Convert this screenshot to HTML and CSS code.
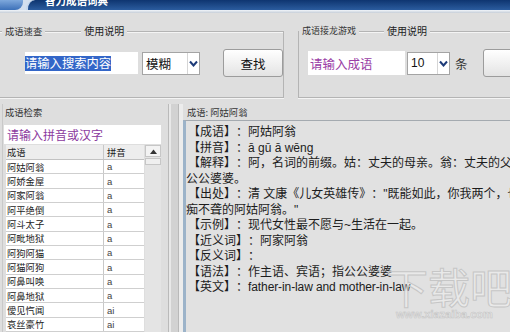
FILE: index.html
```html
<!DOCTYPE html>
<html lang="zh-CN">
<head>
<meta charset="utf-8">
<title>智力成语词典</title>
<link rel="stylesheet" href="styles.css">
</head>
<body>
<div class="titlebar">
  <div class="tb-left"></div>
  <div class="tb-main"><span class="tb-title">智力成语词典</span></div>
</div>
<div class="strip"></div>

<div class="top">
  <div class="group g1">
    <div class="gh"><span class="gl gl1">成语速查</span><span class="gl gl2">使用说明</span></div>
    <div class="grow">
      <div class="inp inp1"><span class="sel">请输入搜索内容</span></div>
      <div class="combo cb1"><span class="cv">模糊</span><span class="arr"><svg width="9" height="7" viewBox="0 0 9 7"><path d="M1 1.5 L4.5 5.5 L8 1.5" fill="none" stroke="#1d3a78" stroke-width="2"/></svg></span></div>
      <div class="btn">查找</div>
    </div>
  </div>
  <div class="group g2">
    <div class="gh"><span class="gl gl1">成语接龙游戏</span><span class="gl gl2">使用说明</span></div>
    <div class="grow">
      <div class="inp inp2">请输入成语</div>
      <div class="combo cb2"><span class="cv">10</span><span class="arr"><svg width="9" height="7" viewBox="0 0 9 7"><path d="M1 1.5 L4.5 5.5 L8 1.5" fill="none" stroke="#1d3a78" stroke-width="2"/></svg></span></div>
      <span class="tiao">条</span>
      <div class="btn btn2"></div>
    </div>
  </div>
</div>

<div class="lower">
  <div class="lp">
    <div class="plabel">成语检索</div>
    <div class="pinp">请输入拼音或汉字</div>
    <div class="tablewrap">
      <div class="tbl">
        <div class="thead"><span class="c1">成语</span><span class="c2">拼音</span></div>
        <div class="tr"><span class="c1">阿姑阿翁</span><span class="c2">a</span></div>
        <div class="tr"><span class="c1">阿娇金屋</span><span class="c2">a</span></div>
        <div class="tr"><span class="c1">阿家阿翁</span><span class="c2">a</span></div>
        <div class="tr"><span class="c1">阿平绝倒</span><span class="c2">a</span></div>
        <div class="tr"><span class="c1">阿斗太子</span><span class="c2">a</span></div>
        <div class="tr"><span class="c1">阿毗地狱</span><span class="c2">a</span></div>
        <div class="tr"><span class="c1">阿狗阿猫</span><span class="c2">a</span></div>
        <div class="tr"><span class="c1">阿猫阿狗</span><span class="c2">a</span></div>
        <div class="tr"><span class="c1">阿鼻叫唤</span><span class="c2">a</span></div>
        <div class="tr"><span class="c1">阿鼻地狱</span><span class="c2">a</span></div>
        <div class="tr"><span class="c1">僾见忾闻</span><span class="c2">ai</span></div>
        <div class="tr"><span class="c1">哀丝豪竹</span><span class="c2">ai</span></div>
      </div>
      <div class="sb">
        <div class="sb-up"><svg width="7" height="5" viewBox="0 0 7 5"><path d="M0 5 L3.5 0.5 L7 5 Z" fill="#333"/></svg></div>
        <div class="sb-thumb"></div>
      </div>
    </div>
  </div>
  <div class="splitter"></div>
  <div class="rp">
    <div class="plabel rlabel">成语: 阿姑阿翁</div>
    <div class="content">
      <div class="ln b">【成语】：阿姑阿翁</div>
      <div class="ln b">【拼音】：ā gū ā wēng</div>
      <div class="ln b">【解释】：阿，名词的前缀。姑：丈夫的母亲。翁：丈夫的父亲。指</div>
      <div class="ln">公公婆婆。</div>
      <div class="ln b">【出处】：清 文康《儿女英雄传》："既能如此，你我两个，也乐得放开心胸，做个不</div>
      <div class="ln">痴不聋的阿姑阿翁。"</div>
      <div class="ln b">【示例】：现代女性最不愿与~生活在一起。</div>
      <div class="ln b">【近义词】：阿家阿翁</div>
      <div class="ln b">【反义词】：</div>
      <div class="ln b">【语法】：作主语、宾语；指公公婆婆</div>
      <div class="ln b">【英文】：<span class="en">father-in-law and mother-in-law</span></div>
    </div>
  </div>
</div>

<div class="wm"><span class="wm-big">下载吧</span><span class="wm-url">www.xiazaiba.com</span></div>
</body>
</html>
```

FILE: styles.css
```css
* { box-sizing: border-box; }
html, body { margin: 0; padding: 0; }
body {
  width: 510px;
  height: 332px;
  overflow: hidden;
  position: relative;
  background: #dedede;
  font-family: "Liberation Sans", "Noto Sans CJK SC", sans-serif;
  color: #222;
  text-spacing-trim: space-all;
}

/* title bar */
.titlebar {
  display: flex;
  height: 10px;
  background: #d3dfee;
}
.tb-left {
  width: 23px;
  background: linear-gradient(#7ea8dc, #3c70b8);
  border-bottom-right-radius: 8px;
}
.tb-main {
  flex: 1;
  margin-left: 3px;
  background: linear-gradient(#0e3570, #2b5c9e);
  border-left: 2px solid #c4d7ee;
  border-top-left-radius: 9px;
  overflow: hidden;
  padding-left: 17px;
}
.tb-title {
  display: block;
  margin-top: -6px;
  font-family: "Noto Sans CJK SC", sans-serif;
  font-size: 10.5px;
  font-weight: bold;
  line-height: 14px;
  color: #fff;
}
.strip {
  height: 3px;
  background: linear-gradient(#f1f5fa, #c6ced8);
}

/* group boxes */
.top {
  display: flex;
  margin-top: 18px;
}
.group {
  height: 67px;
  border-top: 1px solid #b4b4b4;
  border-bottom: 1px solid #b4b4b4;
  box-shadow: 0 1px 0 #f4f4f4, inset 0 1px 0 #f4f4f4;
}
.g1 {
  width: 301px;
  border-right: 1px solid #b4b4b4;
}
.g2 {
  flex: 1;
  margin-left: 14px;
  border-left: 1px solid #b4b4b4;
}
.gh {
  display: flex;
  height: 12px;
  margin-top: -7px;
  align-items: center;
  line-height: 12px;
}
.gl {
  background: #dedede;
  padding: 0 3px;
  font-family: "Noto Sans CJK SC", sans-serif;
  color: #333;
}
.gl1 { font-size: 9.3px; }
.gl2 { font-size: 10px; color: #222; }
.g1 .gl1 { margin-left: 2px; }
.g1 .gl2 { margin-left: 36px; }
.g2 .gl1 { margin-left: 0; font-size: 9px; }
.g2 .gl2 { margin-left: 25px; }

.grow {
  display: flex;
  align-items: center;
  height: 28px;
  margin-top: 12px;
}
.g1 .grow { padding-left: 25px; }
.g2 .grow { padding-left: 9px; }

.inp {
  height: 22px;
  background: #fff;
  display: flex;
  align-items: center;
  font-family: "Noto Sans CJK SC", sans-serif;
}
.inp1 { width: 113px; }
.sel {
  background: #3366c8;
  color: #fff;
  font-size: 12.3px;
  line-height: 15px;
  white-space: nowrap;
}
.inp2 {
  width: 97px;
  height: 24px;
  padding-left: 2px;
  color: #9a3ea6;
  font-size: 12.5px;
}
.combo {
  height: 23px;
  margin-left: 4px;
  display: flex;
  align-items: stretch;
  background: #fff;
  border: 1px solid #a4a4a4;
}
.cb1 { width: 58px; }
.cb2 { width: 43px; margin-left: 2px; }
.cv {
  flex: 1;
  padding-left: 3px;
  display: flex;
  align-items: center;
  font-family: "Noto Sans CJK SC", sans-serif;
  font-size: 12.5px;
  color: #111;
}
.cb2 .cv { font-family: "Liberation Sans", sans-serif; font-size: 12px; }
.arr {
  width: 12px;
  display: flex;
  align-items: center;
  justify-content: center;
  border-left: 1px solid #d6d6d6;
}
.tiao {
  margin-left: 5px;
  font-family: "Noto Sans CJK SC", sans-serif;
  font-size: 12.5px;
  color: #333;
}
.btn {
  width: 60px;
  height: 28px;
  margin-left: 23px;
  border: 1px solid #9c9c9c;
  border-radius: 3px;
  background: linear-gradient(#ffffff, #e3e3e3);
  display: flex;
  align-items: center;
  justify-content: center;
  font-family: "Noto Sans CJK SC", sans-serif;
  font-size: 12.5px;
  color: #111;
}
.btn2 { margin-left: 15px; flex: none; }

/* lower panels */
.lower {
  display: flex;
  margin-top: 6px;
  height: 228px;
}
.lp {
  width: 167px;
  margin-left: 2px;
  border-left: 1px solid #c9c9c9;
  border-right: 1px solid #bababa;
  overflow: hidden;
}
.plabel {
  height: 16px;
  line-height: 16px;
  padding-left: 2px;
  font-family: "Noto Sans CJK SC", sans-serif;
  font-size: 9.3px;
  color: #333;
  white-space: nowrap;
}
.pinp {
  width: 157px;
  height: 19px;
  margin: 5px 0 0 1px;
  padding-left: 3px;
  background: #fff;
  color: #8b3a9e;
  font-family: "Noto Sans CJK SC", sans-serif;
  font-size: 12px;
  line-height: 19px;
}
.tablewrap {
  display: flex;
  margin: 1px 0 0 3px;
}
.tbl { width: 138px; }
.thead, .tr {
  display: flex;
  align-items: stretch;
  font-family: "Noto Sans CJK SC", sans-serif;
  font-size: 9.3px;
  color: #222;
}
.thead {
  height: 15px;
  background: #ededed;
  border-bottom: 1px solid #c2c2c2;
}
.tr {
  height: 14.35px;
  background: #fff;
  border-bottom: 1px solid #cfcfcf;
}
.c1 {
  width: 98px;
  padding-left: 1px;
  border-right: 1px solid #c8c8c8;
  display: flex;
  align-items: center;
}
.c2 {
  flex: 1;
  padding-left: 3px;
  display: flex;
  align-items: center;
}
.tr .c2 {
  font-family: "Liberation Sans", sans-serif;
  font-size: 9.5px;
  color: #444;
}
.sb {
  width: 16px;
  margin-left: 1px;
  height: 190px;
  background: #e4e4e4;
}
.sb-up {
  height: 12px;
  background: #f3f3f3;
  border: 1px solid #c6c6c6;
  display: flex;
  align-items: center;
  justify-content: center;
}
.sb-thumb {
  height: 7px;
  margin-top: 1px;
  background: #efefef;
  border: 1px solid #c6c6c6;
}

.splitter {
  width: 14px;
  background: linear-gradient(90deg, #e8e8e8 0 2px, #d2d2d2 2px 9px, #b9b9b9 9px 10px, #ececec 10px 14px);
}

.rp {
  flex: 1;
  display: flex;
  flex-direction: column;
  overflow: hidden;
}
.rlabel { padding-left: 4px; }
.content {
  flex: 1;
  background: #e1e1e1;
  border-top: 1px solid #a4aab0;
  border-left: 3px solid #9cb3c9;
  padding: 4px 0 0 0;
  font-family: "Liberation Sans", "Noto Sans CJK SC", sans-serif;
  font-size: 12px;
  line-height: 15.5px;
  color: #1c1c1c;
  white-space: nowrap;
  overflow: hidden;
}
.ln.b { padding-left: 2px; }
.en { letter-spacing: -0.1px; }

/* watermark overlay */
.wm {
  position: absolute;
  left: 386px;
  top: 256px;
  width: 124px;
  height: 72px;
  pointer-events: none;
}
.wm-big {
  display: block;
  font-family: "Noto Sans CJK SC", sans-serif;
  font-size: 42px;
  line-height: 60px;
  font-weight: normal;
  color: rgba(255, 255, 255, 0.3);
  -webkit-text-stroke: 1px #c6c6c6;
  white-space: nowrap;
}
.wm-url {
  position: absolute;
  left: 10px;
  top: 52px;
  font-family: "Liberation Sans", sans-serif;
  font-size: 11px;
  font-weight: bold;
  color: rgba(255, 255, 255, 0.3);
  -webkit-text-stroke: 0.6px #c6c6c6;
  white-space: nowrap;
}
```
